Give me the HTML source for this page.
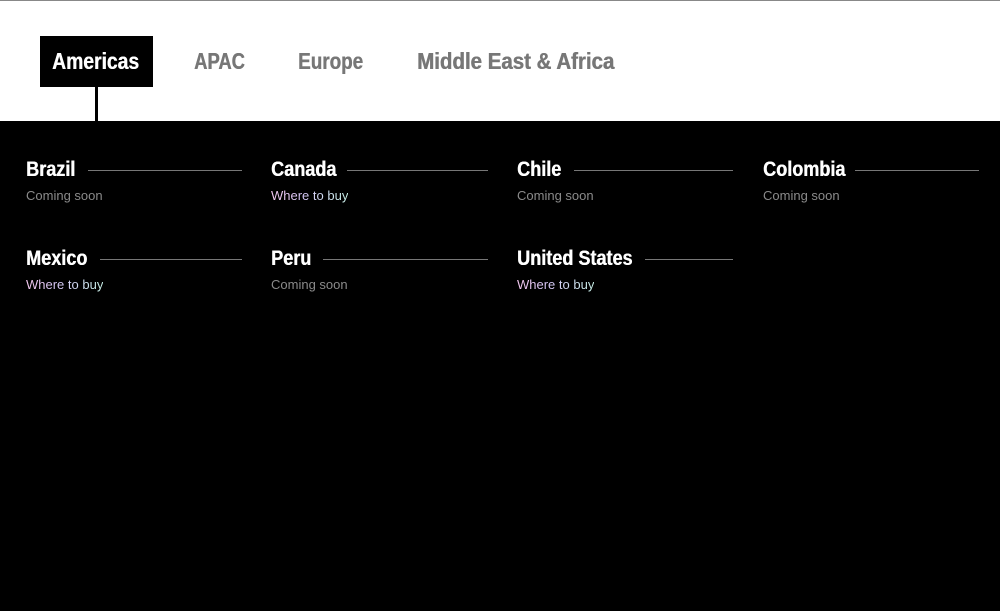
<!DOCTYPE html>
<html><head><style>
*{margin:0;padding:0;box-sizing:border-box}
body{width:1000px;height:611px;background:#000;overflow:hidden;font-family:"Liberation Sans",sans-serif}
.top{position:absolute;left:0;top:0;width:1000px;height:121px;background:#fff;border-top:1px solid #888}
.tab{position:absolute;top:35px;height:51px;line-height:51px;font-weight:bold;font-size:23px;color:#777;transform:scaleX(0.84);transform-origin:left;white-space:nowrap;text-shadow:0.5px 0 0 currentColor}
.act{left:40px;top:35px;width:113px;height:51px;position:absolute;background:#000}
.stem{position:absolute;left:95px;top:86px;width:3px;height:36px;background:#000}
.item{position:absolute}
.item h3{font-weight:bold;font-size:21px;color:#fff;height:24px;line-height:24px;transform:scaleX(0.86);transform-origin:left;white-space:nowrap;text-shadow:0.5px 0 0 #fff}
.ln{position:absolute;top:12px;height:1px;background:#777}
.item p{font-size:13px;color:#8a8a8a;margin-top:6px;white-space:nowrap}
.item p.b{background:linear-gradient(90deg,#f4c8f0,#d8c8f8 40%,#c8f0e8);-webkit-background-clip:text;background-clip:text;color:transparent;display:inline-block}
</style></head><body>
<div class="top">
<div class="act"></div>
<div class="tab" style="left:52px;color:#fff">Americas</div>
<div class="tab" style="left:194px;transform:scaleX(0.8)">APAC</div>
<div class="tab" style="left:298px;transform:scaleX(0.82)">Europe</div>
<div class="tab" style="left:417px;transform:scaleX(0.89)">Middle East &amp; Africa</div>
<div class="stem"></div>
</div>
<div class="item" style="left:26px;top:158px"><h3>Brazil</h3><div class="ln" style="left:62px;width:154px"></div><p>Coming soon</p></div>
<div class="item" style="left:271px;top:158px"><h3>Canada</h3><div class="ln" style="left:76px;width:141px"></div><p class="b">Where to buy</p></div>
<div class="item" style="left:517px;top:158px"><h3>Chile</h3><div class="ln" style="left:57px;width:159px"></div><p>Coming soon</p></div>
<div class="item" style="left:763px;top:158px"><h3>Colombia</h3><div class="ln" style="left:92px;width:124px"></div><p>Coming soon</p></div>
<div class="item" style="left:26px;top:247px"><h3>Mexico</h3><div class="ln" style="left:74px;width:142px"></div><p class="b">Where to buy</p></div>
<div class="item" style="left:271px;top:247px"><h3>Peru</h3><div class="ln" style="left:52px;width:165px"></div><p>Coming soon</p></div>
<div class="item" style="left:517px;top:247px"><h3>United States</h3><div class="ln" style="left:128px;width:88px"></div><p class="b">Where to buy</p></div>
</body></html>
